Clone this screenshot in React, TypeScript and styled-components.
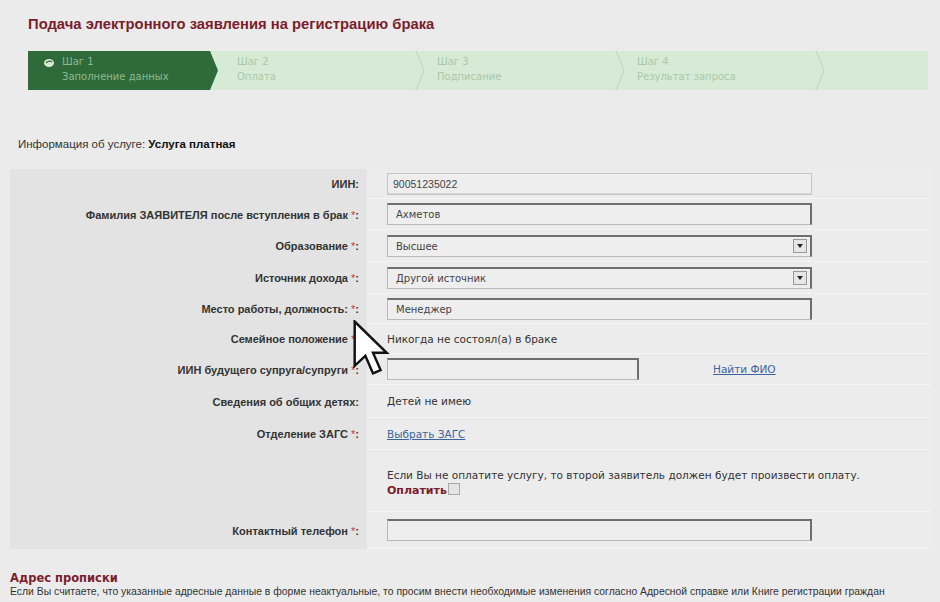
import React from 'react';
import styled, { createGlobalStyle } from 'styled-components';

const GlobalStyle = createGlobalStyle`
  html, body {
    margin: 0;
    padding: 0;
    background: #ebebeb;
  }
  body {
    width: 940px;
    height: 602px;
    overflow: hidden;
    font-family: 'Liberation Sans', Arial, sans-serif;
    color: #333;
  }
`;

const Page = styled.div`
  position: relative;
  padding: 15px 10px 0 10px;
`;

const Title = styled.h1`
  margin: 0 0 0 18px;
  font-family: 'Liberation Sans', Arial, sans-serif;
  font-size: 14.8px;
  font-weight: bold;
  color: #7b1d2b;
  line-height: 18px;
`;

const Steps = styled.div`
  display: flex;
  margin: 18px 0 0 18px;
  width: 900px;
  height: 39px;
  background: #d7ead6;
`;

const Step = styled.div<{ $active?: boolean }>`
  position: relative;
  display: flex;
  align-items: flex-start;
  width: ${(p) => (p.$active ? 198 : 200)}px;
  flex-shrink: 0;
  padding: 3px 0 0 ${(p) => (p.$active ? 13 : 11)}px;
  box-sizing: border-box;
  background: ${(p) => (p.$active ? '#2f6a3a' : 'transparent')};
  clip-path: ${(p) =>
    p.$active ? 'polygon(0 0, 182px 0, 190px 50%, 182px 100%, 0 100%)' : 'none'};
  font-family: 'DejaVu Sans', Verdana, sans-serif;
  font-size: 10px;
  line-height: 15px;
  color: ${(p) => (p.$active ? '#8cbb8f' : '#a9c9a9')};
`;

const StepText = styled.div`
  display: flex;
  flex-direction: column;
`;

const Chevron = styled.svg`
  position: absolute;
  right: 0;
  top: 0;
`;

const Info = styled.div`
  margin: 48px 0 0 8px;
  font-size: 11.5px;
  color: #333;
  b {
    color: #111;
  }
`;

const Form = styled.div`
  margin-top: 19px;
  width: 920px;
  display: grid;
  grid-template-columns: 357px 1fr;
`;

const Label = styled.div<{ $h: number }>`
  height: ${(p) => p.$h}px;
  background: #e2e3e2;
  display: flex;
  align-items: center;
  justify-content: flex-end;
  padding-right: 8px;
  font-size: 11px;
  font-weight: bold;
  color: #333;
  white-space: nowrap;
  span {
    color: #c23b3b;
    font-weight: normal;
  }
`;

const Cell = styled.div<{ $h: number }>`
  height: ${(p) => p.$h}px;
  background: #ececec;
  border-bottom: 1px solid #f4f4f4;
  box-sizing: border-box;
  display: flex;
  align-items: center;
  padding-left: 20px;
  font-family: 'DejaVu Sans', Verdana, sans-serif;
  font-size: 10.5px;
  color: #333;
`;

const Input = styled.div<{ $w?: number; $disabled?: boolean }>`
  width: ${(p) => p.$w ?? 425}px;
  height: 22px;
  box-sizing: border-box;
  background: #eeeeee;
  border: 1px solid #b9b9b9;
  ${(p) =>
    p.$disabled
      ? 'border-color: #c4c4c4; box-shadow: inset 0 -1px 0 #d9d9d9;'
      : 'border-top: 2px solid #6e6e6e; border-right: 2px solid #6e6e6e;'}
  display: flex;
  align-items: center;
  padding-left: ${(p) => (p.$disabled ? 5 : 8)}px;
  font-family: ${(p) =>
    p.$disabled ? "'Liberation Sans', Arial, sans-serif" : "'DejaVu Sans', Verdana, sans-serif"};
  font-size: ${(p) => (p.$disabled ? 10.5 : 10)}px;
  color: #444;
`;

const Select = styled(Input)`
  justify-content: space-between;
  padding-right: 3px;
`;

const SelectButton = styled.div`
  width: 14px;
  height: 14px;
  box-sizing: border-box;
  border: 1px solid #9a9a9a;
  background: #e6e6e6;
  display: flex;
  align-items: center;
  justify-content: center;
`;

const Link = styled.a`
  color: #3a64a0;
  text-decoration: underline;
  font-size: 10.5px;
  cursor: pointer;
`;

const FindLink = styled(Link)`
  margin-left: 74px;
`;

const PayBlock = styled.div`
  display: flex;
  flex-direction: column;
  gap: 2px;
  padding-top: 4px;
  line-height: 14px;
`;

const PayLine = styled.div`
  display: flex;
  align-items: center;
  font-weight: bold;
  color: #7b1d2b;
  font-size: 11px;
`;

const Check = styled.span`
  width: 10px;
  height: 10px;
  border: 1px solid #aaa;
  background: #e4e4e4;
  margin-left: 1px;
  margin-top: -3px;
`;

const Section = styled.div`
  margin-top: 22px;
`;

const SectionTitle = styled.div`
  font-family: 'DejaVu Sans', Verdana, sans-serif;
  font-weight: bold;
  font-size: 11.5px;
  color: #7b1d2b;
  line-height: 14px;
`;

const SectionText = styled.div`
  font-size: 10.4px;
  color: #333;
  line-height: 13px;
  white-space: nowrap;
`;

const Cursor = styled.svg`
  position: absolute;
  left: 353px;
  top: 320px;
`;

const Req = () => <span>&nbsp;*</span>;

const Arrow = () => (
  <svg width="8" height="6" viewBox="0 0 8 6">
    <path d="M1 1 L7 1 L4 5 Z" fill="#222" />
  </svg>
);

const steps = [
  { n: 'Шаг 1', t: 'Заполнение данных' },
  { n: 'Шаг 2', t: 'Оплата' },
  { n: 'Шаг 3', t: 'Подписание' },
  { n: 'Шаг 4', t: 'Результат запроса' },
];

export default function App() {
  return (
    <Page>
      <GlobalStyle />
      <Title>Подача электронного заявления на регистрацию брака</Title>
      <Steps>
        {steps.map((s, i) => (
          <Step key={s.n} $active={i === 0}>
            {i === 0 && (
              <svg width="16" height="12" viewBox="0 0 16 12" style={{ marginRight: 5, marginTop: 3 }}>
                <ellipse cx="8" cy="6" rx="5" ry="4" fill="#d9ecd6" />
                <path d="M5 6 Q8 3 11 5" stroke="#2f6a3a" strokeWidth="1.2" fill="none" />
              </svg>
            )}
            <StepText>
              <div>{s.n}</div>
              <div>{s.t}</div>
            </StepText>
            {i > 0 && (
              <Chevron width="12" height="39" viewBox="0 0 12 39">
                <path d="M2 0 L10 19.5 L2 39" stroke="#bcd3bb" strokeWidth="1" fill="none" />
              </Chevron>
            )}
          </Step>
        ))}
      </Steps>

      <Info>
        Информация об услуге: <b>Услуга платная</b>
      </Info>

      <Form>
        <Label $h={30}>ИИН:</Label>
        <Cell $h={30}>
          <Input $disabled>90051235022</Input>
        </Cell>

        <Label $h={31}>
          Фамилия ЗАЯВИТЕЛЯ после вступления в брак<Req />:
        </Label>
        <Cell $h={31}>
          <Input>Ахметов</Input>
        </Cell>

        <Label $h={32}>
          Образование<Req />:
        </Label>
        <Cell $h={32}>
          <Select>
            Высшее
            <SelectButton>
              <Arrow />
            </SelectButton>
          </Select>
        </Cell>

        <Label $h={32}>
          Источник дохода<Req />:
        </Label>
        <Cell $h={32}>
          <Select>
            Другой источник
            <SelectButton>
              <Arrow />
            </SelectButton>
          </Select>
        </Cell>

        <Label $h={30}>
          Место работы, должность:<Req />:
        </Label>
        <Cell $h={30}>
          <Input>Менеджер</Input>
        </Cell>

        <Label $h={30}>
          Семейное положение<Req />:
        </Label>
        <Cell $h={30}>Никогда не состоял(а) в браке</Cell>

        <Label $h={31}>
          ИИН будущего супруга/супруги<Req />:
        </Label>
        <Cell $h={31}>
          <Input $w={252} />
          <FindLink>Найти ФИО</FindLink>
        </Cell>

        <Label $h={33}>Сведения об общих детях:</Label>
        <Cell $h={33}>Детей не имею</Cell>

        <Label $h={32}>
          Отделение ЗАГС<Req />:
        </Label>
        <Cell $h={32}>
          <Link>Выбрать ЗАГС</Link>
        </Cell>

        <Label $h={62} />
        <Cell $h={62}>
          <PayBlock>
            <div>Если Вы не оплатите услугу, то второй заявитель должен будет произвести оплату.</div>
            <PayLine>
              Оплатить
              <Check />
            </PayLine>
          </PayBlock>
        </Cell>

        <Label $h={37}>
          Контактный телефон<Req />:
        </Label>
        <Cell $h={37}>
          <Input />
        </Cell>
      </Form>

      <Section>
        <SectionTitle>Адрес прописки</SectionTitle>
        <SectionText>
          Если Вы считаете, что указанные адресные данные в форме неактуальные, то просим внести необходимые изменения
          согласно Адресной справке или Книге регистрации граждан
        </SectionText>
      </Section>

      <Cursor width="40" height="58" viewBox="0 0 26 38">
        <path
          d="M1 1 L1 30 L8 23.5 L13 35 L18 32.8 L13 21.5 L22 21.5 Z"
          fill="#fff"
          stroke="#111"
          strokeWidth="1.6"
          strokeLinejoin="miter"
        />
      </Cursor>
    </Page>
  );
}
